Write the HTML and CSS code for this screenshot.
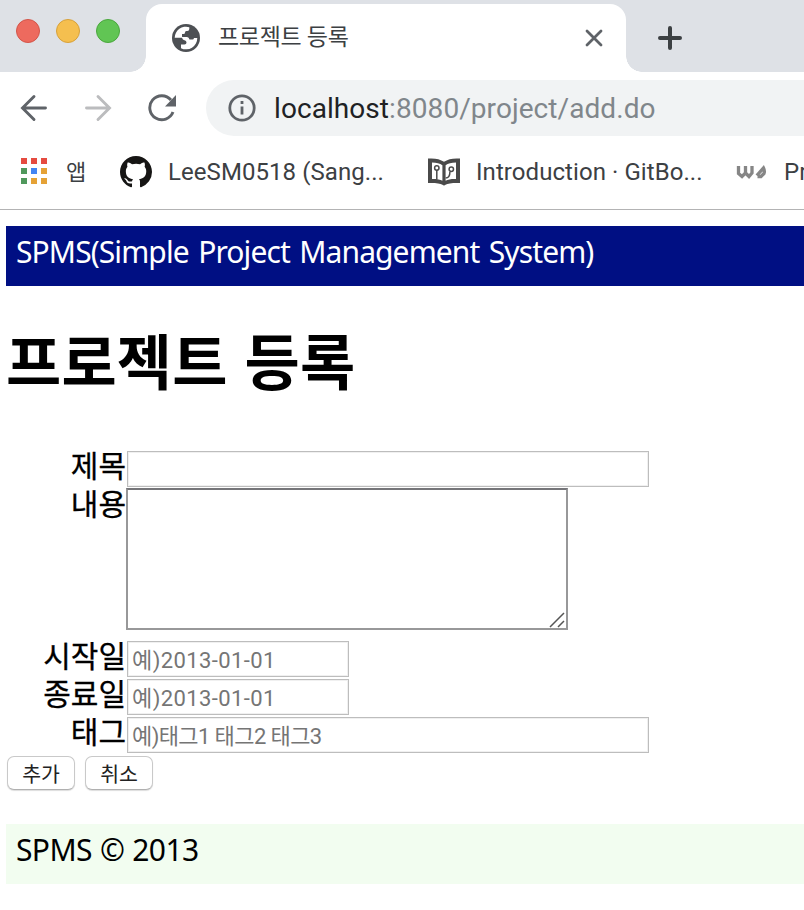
FILE: index.html
```html
<!DOCTYPE html>
<html lang="ko">
<head>
<meta charset="utf-8">
<title>프로젝트 등록</title>
<link rel="stylesheet" href="styles.css">
</head>
<body>
<header class="browser">
  <div class="tabstrip">
    <div class="lights"><i class="light red"></i><i class="light yellow"></i><i class="light green"></i></div>
    <div class="tab">
      <svg class="globe" viewBox="0 0 28 28"><circle cx="14" cy="14" r="14" fill="#4d5054"/><path d="M2.700 13.800A11.300 11.300 0 0 1 17.300 3.200V5q0 2-2 2h-1q-1.300 0-1.300 1.500T11.500 10H10v2.500q0 .5.500.5H15q2 0 2.500 2.500h3q1.200 0 1.500-1.500h3.300A11.300 11.300 0 0 1 9 24.200v-3.700h3.500q2 0 2-2t-2-2.200-2.500-2.500z" fill="#fff"/></svg>
      <span class="tab-title">프로젝트 등록</span>
      <svg class="close" viewBox="0 0 18 18"><path d="M2 2l14 14M16 2L2 16"/></svg>
    </div>
    <div class="newtab"><svg viewBox="0 0 24 24"><path d="M12 2v20M2 12h20"/></svg></div>
  </div>
  <div class="toolbar">
    <svg class="nav" viewBox="0 0 28 28"><path d="M25.500 14H3M14 2.500L2.500 14 14 25.500"/></svg>
    <svg class="nav forward" viewBox="0 0 28 28"><path d="M2.500 14H25M14 2.500L25.500 14 14 25.500"/></svg>
    <svg class="nav reload" viewBox="0 0 28 28"><path d="M25 18A12 12 0 1 1 23 6"/><path class="fill" d="M28 1v11.500H17z"/></svg>
    <div class="omnibox">
      <svg class="info" viewBox="0 0 28 28"><circle cx="14" cy="14" r="12.200"/><path d="M14 12.500v8M14 7v3"/></svg>
      <span class="url"><b>localhost</b>:8080/project/add.do</span>
    </div>
  </div>
  <nav class="bookmarks">
    <span class="apps"><i class="r"></i><i class="r"></i><i class="r"></i><i class="g"></i><i class="b"></i><i class="y"></i><i class="g"></i><i class="y"></i><i class="y"></i></span>
    <span class="bm-apps">앱</span>
    <svg class="github" viewBox="0 0 16 16"><path fill="#161514" d="M8 0C3.580 0 0 3.580 0 8c0 3.540 2.290 6.530 5.470 7.590.4.070.55-.17.55-.38 0-.19-.01-.82-.01-1.490-2.010.37-2.530-.49-2.690-.94-.09-.23-.48-.94-.82-1.130-.28-.15-.68-.52-.01-.53.63-.01 1.080.58 1.230.82.72 1.210 1.870.87 2.330.66.070-.52.28-.87.51-1.070-1.780-.2-3.640-.89-3.640-3.950 0-.87.31-1.590.82-2.150-.08-.2-.36-1.020.08-2.120 0 0 .67-.21 2.200.82.64-.18 1.320-.27 2-.27s1.360.09 2 .27c1.530-1.040 2.200-.82 2.200-.82.44 1.100.16 1.920.08 2.120.51.56.82 1.270.82 2.150 0 3.070-1.870 3.750-3.650 3.950.29.25.54.73.54 1.480 0 1.070-.01 1.930-.01 2.200 0 .21.15.46.55.38A8.010 8.010 0 0 0 16 8c0-4.420-3.580-8-8-8z"/></svg>
    <span class="bm-github">LeeSM0518 (Sang...</span>
    <svg class="book" viewBox="0 0 32 28"><path class="cover" d="M0 .5C7 0 12 1 16 3.800 20 1 25 0 32 .5V25c-7-.3-12 .4-14.500 1.700-.7 1-2.300 1-3 0C12 25.400 7 24.700 0 25z"/><path class="page" d="M4 4.500c4.500 0 8 .8 10.400 2.700v15.600C12 21.300 8 20.800 4 21zM28 4.500c-4.500 0-8 .8-10.400 2.700v15.600C20 21.300 24 20.800 28 21z"/><path class="line" d="M8.800 12v9.500M17.600 20c4 0 4.300-3 4.300-6"/><circle cx="8.800" cy="10" r="2.200"/><circle cx="23.300" cy="11.200" r="2.200"/></svg>
    <span class="bm-gitbook">Introduction · GitBo...</span>
    <svg class="ws" viewBox="0 0 32 14"><path d="M2.500 1v7.500L6 11.500 9.500 8V1M9.500 8l3.500 3.500L16 8V1"/><path d="M20.800 10.500L27.500 3q1.500 3 .5 5.500l-3 3h-3.500"/></svg>
    <span class="bm-last">Pr</span>
  </nav>
</header>
<main>
  <div class="banner"><span>SPMS(Simple Project Management System)</span></div>
  <h1>프로젝트 등록</h1>
  <form>
    <ul>
      <li><label for="title">제목</label><input id="title" class="wide" type="text"></li>
      <li class="tall"><label for="content">내용</label><div class="area"><textarea id="content"></textarea><svg viewBox="0 0 16 16"><path d="M1 15L15 1M9 15l6-6"/></svg></div></li>
      <li><label for="start">시작일</label><input id="start" type="text" placeholder="예)2013-01-01"></li>
      <li><label for="end">종료일</label><input id="end" type="text" placeholder="예)2013-01-01"></li>
      <li><label for="tags">태그</label><input id="tags" class="wide tags" type="text" placeholder="예)태그1 태그2 태그3"></li>
    </ul>
    <div class="buttons"><button type="button">추가</button><button type="button">취소</button></div>
  </form>
  <footer><span>SPMS © 2013</span></footer>
</main>
</body>
</html>
```
FILE: styles.css
```css
* { box-sizing: border-box; }
body { margin: 0; width: 804px; height: 910px; overflow: hidden; background: #fff; color: #000; font-family: "Noto Sans", "Noto Sans CJK KR", sans-serif; }
svg { display: block; flex: none; }
span, label { white-space: nowrap; }

.browser { height: 210px; border-bottom: 1px solid #b3b3b4; font-family: Roboto, "Noto Sans CJK KR", sans-serif; color: #3c4043; overflow: hidden; }
.tabstrip { height: 72px; background: #dee1e6; display: flex; }
.lights { width: 146px; flex: none; padding: 19px 0 0 16px; display: flex; gap: 16px; background: radial-gradient(circle at 0 0, #dee1e6 15.500px, #fff 16px) no-repeat 130px 56px / 16px 16px; }
.light { width: 24px; height: 24px; border-radius: 50%; border: 1px solid; }
.red { background: #ed6a5e; border-color: #d35549; }
.yellow { background: #f5bf4f; border-color: #d7a13b; }
.green { background: #61c554; border-color: #4aa73d; }
.tab { width: 480px; flex: none; height: 68px; margin-top: 4px; background: #fff; border-radius: 16px 16px 0 0; display: flex; align-items: center; padding: 0 23px 0 26px; }
.globe { width: 28px; height: 28px; }
.tab-title { margin-left: 18px; margin-right: auto; font-size: 23px; letter-spacing: -0.3px; line-height: 34px; }
.close { width: 18px; height: 18px; fill: none; stroke: #5f6368; stroke-width: 2.800; stroke-linecap: round; }
.newtab { flex: 1; padding: 26px 0 0 32px; background: radial-gradient(circle at 100% 0, #dee1e6 15.500px, #fff 16px) no-repeat 0 56px / 16px 16px; }
.newtab svg { width: 24px; height: 24px; fill: none; stroke: #3c4043; stroke-width: 4; stroke-linecap: round; }

.toolbar { height: 72px; display: flex; align-items: center; padding-left: 20px; }
.nav { width: 28px; height: 28px; margin-right: 36px; fill: none; stroke: #5f6368; stroke-width: 2.900; stroke-linecap: round; }
.nav.forward { stroke: #bbbcbe; }
.nav.reload { margin-right: 30px; stroke-linecap: butt; }
.nav .fill { fill: #5f6368; stroke: none; }
.omnibox { flex: 1; height: 56px; border-radius: 28px 0 0 28px; background: #f1f3f4; display: flex; align-items: center; padding-left: 22px; }
.info { width: 28px; height: 28px; fill: none; stroke: #5f6368; stroke-width: 2.800; }
.url { margin-left: 18px; font-size: 28px; letter-spacing: 0.070px; color: #80868b; }
.url b { font-weight: 400; color: #202124; }

.bookmarks { height: 65px; display: flex; align-items: center; padding: 0 0 9px 21px; font-size: 24px; letter-spacing: 0.070px; }
.bookmarks span { flex: none; }
.apps { display: grid; grid-template-columns: repeat(3, 6px); gap: 4px; margin-top: -2px; }
.apps i { height: 6px; }
.r { background: #e54b40; } .g { background: #50985c; } .b { background: #4285f4; } .y { background: #e5a236; }
.bm-apps { width: 54px; margin: -5px 0 0 19px; font-size: 22px; }
.github { width: 32px; height: 32px; margin-left: 0; }
.bm-github { width: 260px; margin-left: 16px; }
.book { width: 32px; height: 28px; }
.book .cover { fill: #4a4a4a; } .book .page { fill: #fff; }
.book .line, .book circle { fill: none; stroke: #4a4a4a; stroke-width: 1.500; }
.bm-gitbook { width: 260px; margin-left: 16px; }
.ws { width: 32px; height: 14px; fill: none; stroke: #868686; stroke-width: 3.300; }
.bm-last { margin-left: 16px; }

main { padding: 16px 0 0 6px; }
.banner, footer { height: 60px; padding: 5px 0 0 10px; font-size: 30px; line-height: 41px; }
.banner { background: #000f83; color: #fff; letter-spacing: -0.900px; word-spacing: 2.500px; }
h1 { margin: 39px 0 0; height: 126px; font: 700 60px/68px "Noto Sans CJK KR", sans-serif; letter-spacing: 0.200px; }
ul { list-style: none; margin: 0; padding: 0; }
li { display: flex; height: 38px; }
li.tall { height: 152px; }
label { width: 120px; flex: none; text-align: right; font-size: 30px; line-height: 32px; margin-top: -1px; -webkit-text-stroke: 0.300px #000; }
input { width: 222px; height: 36px; margin: 0 0 0 1px; padding: 2px 4px 0; border: 1px solid #bdbdbd; box-shadow: inset 0 0 0 1px #f0f0f0; font-family: Roboto, "Noto Sans CJK KR", sans-serif; font-size: 22px; letter-spacing: 0.400px; outline: none; background: #fff; }
input::placeholder { color: #757575; opacity: 1; }
input.wide { width: 522px; }
input.tags { letter-spacing: -0.600px; }
.area { position: relative; width: 442px; height: 142px; margin-top: -1px; }
textarea { display: block; width: 100%; height: 100%; border: 2px solid #989899; border-top-color: #757579; resize: none; background: #fff; }
.area svg { position: absolute; right: 3px; bottom: 2px; width: 16px; height: 16px; fill: none; stroke: #555; stroke-width: 1.500; }
.buttons { display: flex; gap: 10px; padding: 1px 0 0 1px; height: 69px; }
button { width: 68px; height: 34px; border: 1px solid #c9c9c9; border-bottom-color: #b0b0b0; border-radius: 7px; background: #fff; box-shadow: 0 1px 1px #ddd; padding: 0; font: 20.500px/28px "Noto Sans CJK KR", sans-serif; color: #222; }
footer { background: #f2fdf0; letter-spacing: -0.600px; word-spacing: 0.800px; }
```
